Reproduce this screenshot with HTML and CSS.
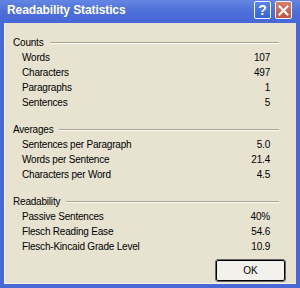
FILE: index.html
```html
<!DOCTYPE html>
<html lang="en">
<head>
    <meta charset="UTF-8">
    <title>Readability Statistics</title>
    <link rel="stylesheet" href="styles.css">
</head>
<body>

<div class="window">
    <div class="titlebar">
        <span class="title">Readability Statistics</span>
        <span class="tb-btn help">?</span>
        <span class="tb-btn close">
            <svg width="11" height="11" viewBox="0 0 11 11"><path d="M1.5 1.5 L9.5 9.5 M9.5 1.5 L1.5 9.5" stroke="#fff" stroke-width="2" stroke-linecap="square"/></svg>
        </span>
    </div>

    <div class="client">
        <div class="group">
            <div class="group-head"><span>Counts</span><i></i></div>
            <div class="row"><span>Words</span><span>107</span></div>
            <div class="row"><span>Characters</span><span>497</span></div>
            <div class="row"><span>Paragraphs</span><span>1</span></div>
            <div class="row"><span>Sentences</span><span>5</span></div>
        </div>

        <div class="group">
            <div class="group-head"><span>Averages</span><i></i></div>
            <div class="row"><span>Sentences per Paragraph</span><span>5.0</span></div>
            <div class="row"><span>Words per Sentence</span><span>21.4</span></div>
            <div class="row"><span>Characters per Word</span><span>4.5</span></div>
        </div>

        <div class="group">
            <div class="group-head"><span>Readability</span><i></i></div>
            <div class="row"><span>Passive Sentences</span><span>40%</span></div>
            <div class="row"><span>Flesch Reading Ease</span><span>54.6</span></div>
            <div class="row"><span>Flesch-Kincaid Grade Level</span><span>10.9</span></div>
        </div>

        <div class="buttons">
            <button type="button">OK</button>
        </div>
    </div>
</div>

</body>
</html>
```

FILE: styles.css
```css
body {
    margin: 0;
    font-family: "Liberation Sans", Arial, sans-serif;
    font-size: 10px;
    letter-spacing: -0.2px;
    color: #000;
    background: #fff;
}
.window {
    width: 300px;
    height: 288px;
    box-sizing: border-box;
    display: flex;
    flex-direction: column;
    background: #4868d6;
    padding: 0 4px 4px 4px;
}
.titlebar {
    height: 23px;
    display: flex;
    align-items: center;
    gap: 4px;
    margin: 0 -4px;
    padding: 0 8px 3px 7px;
    box-sizing: border-box;
    background: linear-gradient(#6486e2, #4d6fd9 50%, #4667d5);
}
.title {
    flex: 1;
    color: #fff;
    font-weight: bold;
    font-size: 12px;
    letter-spacing: -0.1px;
}
.tb-btn {
    width: 17px;
    height: 18px;
    box-sizing: border-box;
    border: 1px solid #f2f4fb;
    border-radius: 2px;
    display: flex;
    align-items: center;
    justify-content: center;
    color: #fff;
    font-weight: bold;
    font-size: 14px;
}
.help {
    background: linear-gradient(#5a84ec, #3762da);
}
.close {
    background: linear-gradient(#d6806c, #bd5645);
}
.client {
    flex: 1;
    background: #e7e3d0;
    padding: 12px 26px 0 8px;
    border-left: 1px solid #f4f2e8;
    border-bottom: 1px solid #f4f2e8;
}
.group {
    margin-bottom: 12px;
}
.group-head {
    display: flex;
    align-items: center;
    gap: 6px;
    height: 15px;
}
.group-head i {
    flex: 1;
    border-top: 1px solid #a9a594;
    border-bottom: 1px solid #fbfaf4;
    margin-right: -9px;
}
.row {
    display: flex;
    justify-content: space-between;
    height: 15px;
    line-height: 15px;
    padding: 0 0 0 9px;
}
.buttons {
    display: flex;
    justify-content: flex-end;
    margin: -6px -15px 0 0;
}
button {
    width: 69px;
    height: 21px;
    font-family: inherit;
    font-size: 10px;
    background: #f2f1eb;
    border: 1px solid #000;
    outline: 1px solid #666;
    border-radius: 2px;
    padding: 0;
}
```
